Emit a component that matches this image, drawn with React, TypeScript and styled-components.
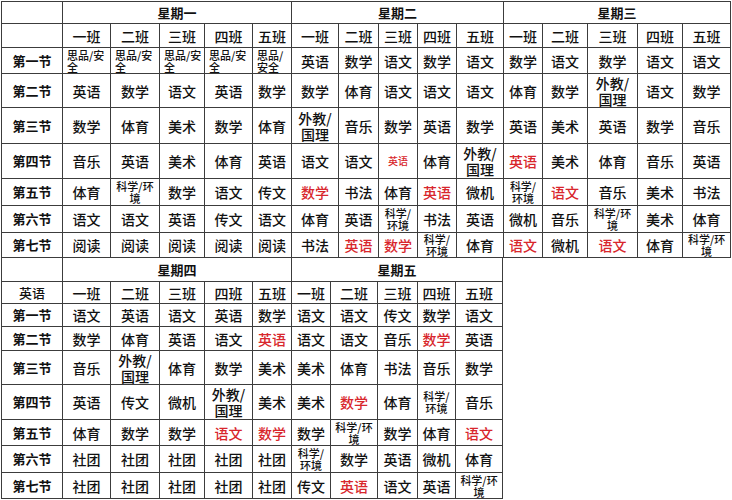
import React from 'react';
import styled, {createGlobalStyle} from "styled-components";

const GlobalStyle = createGlobalStyle`
  html, body {
    margin: 0;
    padding: 0;
    background: #fff;
  }
  body {
    font-family: 'Noto Sans CJK SC', 'Noto Sans', sans-serif;
    color: #111;
  }
`

const Page = styled.div`
  width: 732px;
  height: 500px;
  padding-top: 1px;
  overflow: hidden;
`

const Sheet = styled.table<{ $shift?: boolean }>`
  border-collapse: collapse;
  table-layout: fixed;
  margin-top: ${props => props.$shift ? '-1px' : '0'};
  margin-left: 1px;
`

const Row = styled.tr<{ $h: number }>`
  height: ${props => props.$h}px;
`

const DayHead = styled.th`
  border: 1px solid #3c3c3c;
  padding: 0;
  font-size: 13px;
  line-height: 16px;
  font-weight: 700;
  text-align: center;
  vertical-align: middle;
`

const Blank = styled.td`
  border: 1px solid #3c3c3c;
  padding: 0;
`

const Label = styled.td<{ $plain?: boolean }>`
  border: 1px solid #3c3c3c;
  padding: 0;
  font-size: 13px;
  line-height: 16px;
  font-weight: ${props => props.$plain ? 500 : 700};
  text-align: center;
  vertical-align: middle;
`

type Size = 'normal' | 'small' | 'tiny' | 'split'

const fontSizes: Record<Size, string> = {normal: '14px', split: '14px', small: '11px', tiny: '10px'}
const lineHeights: Record<Size, string> = {normal: '16px', split: '16px', small: '12px', tiny: '12px'}

const Cell = styled.td<{ $red?: boolean; $size: Size; $left?: boolean }>`
  border: 1px solid #3c3c3c;
  padding: ${props => props.$left ? '0 2px 0 4px' : '0 2px'};
  font-size: ${props => fontSizes[props.$size]};
  line-height: ${props => lineHeights[props.$size]};
  font-weight: 500;
  color: ${props => props.$red ? '#d8262c' : '#111'};
  text-align: ${props => props.$left ? 'left' : 'center'};
  vertical-align: middle;
  word-break: break-all;
  overflow: hidden;
`

const SMALL = ['思品/安全', '科学/环境']

// "!" in front = red text, "~" in front = small red
function parse(raw: string) {
    let text = raw
    let red = false
    let size: Size = 'normal'
    if (text.startsWith('~')) {
        red = true
        size = 'tiny'
        text = text.slice(1)
    } else if (text.startsWith('!')) {
        red = true
        text = text.slice(1)
    }
    if (SMALL.includes(text)) size = 'small'
    if (text === '外教/国理') size = 'split'
    const left = text === '思品/安全'
    return {text, red, size, left}
}

function renderText(text: string) {
    if (text === '外教/国理') return <>外教/<br/>国理</>
    return text
}

const CLASSES = ['一班', '二班', '三班', '四班', '五班']
const PERIODS = ['第一节', '第二节', '第三节', '第四节', '第五节', '第六节', '第七节']

interface Block {
    days: string[]
    corner: string
    widths: number[]
    heights: number[]
    rows: string[][]
}

const top: Block = {
    days: ['星期一', '星期二', '星期三'],
    corner: '',
    widths: [61, 48, 49, 45, 48, 39, 47, 40, 39, 39, 47, 39, 45, 50, 45, 48],
    heights: [22, 24, 26, 34, 36, 35, 27, 27, 25],
    rows: [
        ['思品/安全', '思品/安全', '思品/安全', '思品/安全', '思品/安全', '英语', '数学', '语文', '数学', '语文', '数学', '语文', '数学', '语文', '语文'],
        ['英语', '数学', '语文', '英语', '数学', '数学', '体育', '语文', '语文', '语文', '体育', '数学', '外教/国理', '语文', '数学'],
        ['数学', '体育', '美术', '数学', '体育', '外教/国理', '音乐', '数学', '英语', '数学', '英语', '美术', '英语', '数学', '音乐'],
        ['音乐', '英语', '美术', '体育', '英语', '语文', '语文', '~英语', '体育', '外教/国理', '!英语', '美术', '体育', '音乐', '英语'],
        ['体育', '科学/环境', '数学', '语文', '传文', '!数学', '书法', '体育', '!英语', '微机', '科学/环境', '!语文', '音乐', '美术', '书法'],
        ['语文', '语文', '英语', '传文', '语文', '体育', '英语', '科学/环境', '书法', '英语', '微机', '音乐', '科学/环境', '美术', '体育'],
        ['阅读', '阅读', '阅读', '阅读', '阅读', '书法', '!英语', '!数学', '科学/环境', '体育', '!语文', '微机', '!语文', '体育', '科学/环境'],
    ],
}

const bottom: Block = {
    days: ['星期四', '星期五'],
    corner: '英语',
    widths: [61, 48, 49, 45, 48, 39, 39, 47, 40, 38, 47],
    heights: [24, 22, 23, 24, 34, 35, 26, 27, 26],
    rows: [
        ['语文', '英语', '语文', '英语', '数学', '语文', '语文', '传文', '数学', '语文'],
        ['数学', '体育', '英语', '语文', '!英语', '语文', '语文', '音乐', '!数学', '英语'],
        ['音乐', '外教/国理', '体育', '数学', '美术', '美术', '体育', '书法', '音乐', '数学'],
        ['英语', '传文', '微机', '外教/国理', '美术', '美术', '!数学', '体育', '科学/环境', '音乐'],
        ['体育', '数学', '数学', '!语文', '!数学', '数学', '科学/环境', '数学', '体育', '!语文'],
        ['社团', '社团', '社团', '社团', '社团', '科学/环境', '数学', '英语', '微机', '体育'],
        ['社团', '社团', '社团', '社团', '社团', '传文', '!英语', '语文', '英语', '科学/环境'],
    ],
}

function Timetable({block, shift}: { block: Block, shift?: boolean }) {
    const total = block.widths.reduce((a, b) => a + b, 0)
    return (
        <Sheet $shift={shift} style={{width: total}}>
            <colgroup>
                {block.widths.map((w, i) => <col key={i} style={{width: w}}/>)}
            </colgroup>
            <tbody>
            <Row $h={block.heights[0]}>
                <Blank/>
                {block.days.map(d => <DayHead key={d} colSpan={5}>{d}</DayHead>)}
            </Row>
            <Row $h={block.heights[1]}>
                <Label $plain>{block.corner}</Label>
                {block.days.map(d => CLASSES.map(c => <Cell key={d + c} $size="normal">{c}</Cell>))}
            </Row>
            {block.rows.map((row, r) => (
                <Row key={r} $h={block.heights[r + 2]}>
                    <Label>{PERIODS[r]}</Label>
                    {row.map((raw, i) => {
                        const c = parse(raw)
                        return (
                            <Cell key={i} $red={c.red} $size={c.size} $left={c.left}>
                                {renderText(c.text)}
                            </Cell>
                        )
                    })}
                </Row>
            ))}
            </tbody>
        </Sheet>
    )
}

function App() {
    return (
        <Page>
            <GlobalStyle/>
            <Timetable block={top}/>
            <Timetable block={bottom} shift/>
        </Page>
    );
}

export default App;
